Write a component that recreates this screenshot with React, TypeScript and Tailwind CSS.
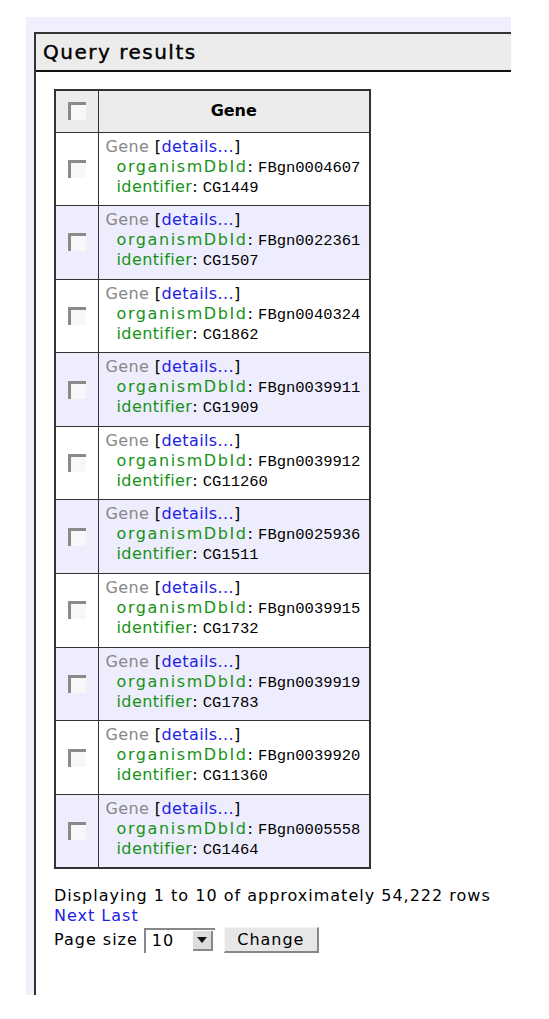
const rows = [
  ["FBgn0004607", "CG1449"],
  ["FBgn0022361", "CG1507"],
  ["FBgn0040324", "CG1862"],
  ["FBgn0039911", "CG1909"],
  ["FBgn0039912", "CG11260"],
  ["FBgn0025936", "CG1511"],
  ["FBgn0039915", "CG1732"],
  ["FBgn0039919", "CG1783"],
  ["FBgn0039920", "CG11360"],
  ["FBgn0005558", "CG1464"],
];

const sans = "font-['DejaVu_Sans',sans-serif]";
const mono = "font-['Liberation_Mono',monospace] tracking-normal";

const Box = () => (
  <div className="w-[18px] h-[18px] bg-[#f7f7f7] border-t-[3px] border-l-[3px] border-[#8a8a8a] mx-auto" />
);

const App = () => {
  return (
    <div className={`${sans} bg-white w-[549px] h-[1019px] pt-[17px] pl-[26px] text-black`}>
      <div className="w-[485px] h-[978px] bg-[#f1effd] pt-[15px] pl-[8px] overflow-hidden">
        <div className="w-[600px] h-full bg-white border-l-2 border-t-2 border-[#333]">
          <div className="h-[38px] bg-[#ececec] border-b-2 border-[#111] px-[7px] flex items-center text-[20px] tracking-[1.5px] [-webkit-text-stroke:0.4px_#000]">
            Query results
          </div>
          <div className="pt-[17px] pl-[18px]">
            <table className="border-collapse border-2 border-[#333] text-[16px] leading-[20px]">
              <thead>
                <tr className="bg-[#ececec]">
                  <th className="w-[43px] h-[42px] border border-[#333]">
                    <Box />
                  </th>
                  <th className="w-[272px] border border-[#333] font-bold text-[16px]">Gene</th>
                </tr>
              </thead>
              <tbody>
                {rows.map(([id, cg], i) => (
                  <tr key={id} className={i % 2 ? "bg-[#eeedfd]" : "bg-white"}>
                    <td className="border border-[#333] align-middle">
                      <Box />
                    </td>
                    <td className="border border-[#333] align-top pl-[7px] pt-[4px] pb-[8.6px] whitespace-nowrap">
                      <div className="h-[20px] tracking-[0.4px]">
                        <span className="text-[#888]">Gene</span> [<span className="text-[#2121e6]">details...</span>]
                      </div>
                      <div className="h-[20px] pl-[11px] flex items-baseline">
                        <span className="text-[#169216] tracking-[1.6px]">organismDbId</span>
                        <span>:&nbsp;</span>
                        <span className={`${mono} text-[15.5px]`}>{id}</span>
                      </div>
                      <div className="h-[20px] pl-[11px] flex items-baseline">
                        <span className="text-[#169216] tracking-[0.4px]">identifier</span>
                        <span>:&nbsp;</span>
                        <span className={`${mono} text-[15.5px]`}>{cg}</span>
                      </div>
                    </td>
                  </tr>
                ))}
              </tbody>
            </table>
            <div className="mt-[17px] text-[16px] leading-[20px] tracking-[1px]">
              <div>Displaying 1 to 10 of approximately 54,222 rows</div>
              <div className="text-[#2121e6]">Next Last</div>
              <div className="flex items-center mt-[1px] h-[26px]">
                <span>Page size</span>
                <div className="ml-[6px] w-[71px] h-[25px] bg-white border-t-2 border-l-2 border-[#888] flex items-center">
                  <span className="pl-[6px] flex-1">10</span>
                  <div className="w-[20px] h-[20px] mr-[2px] bg-[#dcdcdc] border-r-2 border-b-2 border-[#888] flex items-center justify-center">
                    <svg width="10" height="7" viewBox="0 0 10 7">
                      <polygon points="0,0 10,0 5,6" fill="#111" />
                    </svg>
                  </div>
                </div>
                <button className="ml-[9px] w-[95px] h-[26px] bg-[#e7e7e7] border-r-2 border-b-2 border-[#888] border-t border-l border-t-[#f4f4f4] border-l-[#f4f4f4] text-[16px] leading-[20px] tracking-[1px]">
                  Change
                </button>
              </div>
            </div>
          </div>
        </div>
      </div>
    </div>
  );
};

export default App;
